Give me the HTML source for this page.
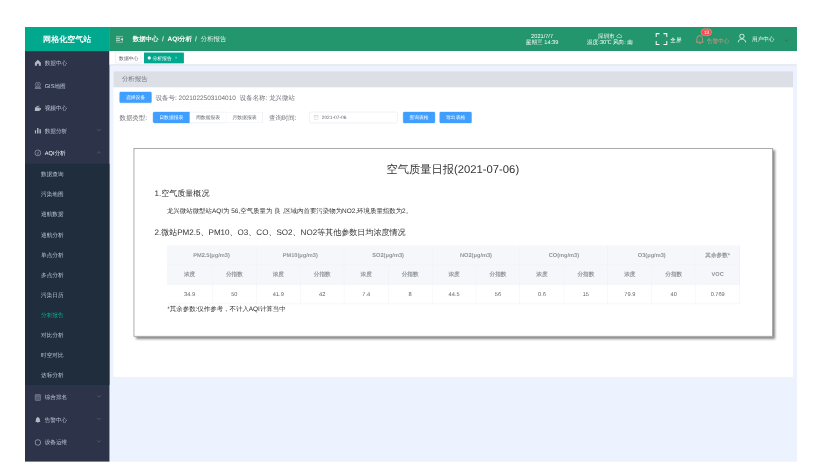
<!DOCTYPE html>
<html lang="zh">
<head>
<meta charset="utf-8">
<title>分析报告</title>
<style>
html,body{margin:0;padding:0;background:#fff;}
body{width:821px;height:475px;overflow:hidden;position:relative;font-family:"Liberation Sans",sans-serif;}
#stage{position:absolute;left:25px;top:27px;width:1920px;height:1081px;transform-origin:0 0;transform:scale(0.40208,0.4022);background:#edf3fe;overflow:hidden;color:#303133;}
#stage *{box-sizing:border-box;}
#stage{text-rendering:geometricPrecision;-webkit-font-smoothing:antialiased;}
.abs{position:absolute;white-space:nowrap;}
/* sidebar */
#side{position:absolute;left:0;top:0;width:210px;height:1081px;background:#2d344a;}
#logo{position:absolute;left:0;top:0;width:210px;height:60px;background:#00a88e;color:#fff;font-weight:bold;font-size:20px;line-height:63px;text-align:center;}
.mi{position:absolute;left:0;width:210px;height:56px;line-height:56px;font-size:14px;color:#bfcbd9;}
.mi span{position:absolute;left:49px;top:2px;white-space:nowrap;}
.mi svg.ic{position:absolute;left:23px;top:20px;width:18px;height:18px;}
.mi svg.ch{position:absolute;left:178px;top:22px;width:12px;height:12px;}
#sub{position:absolute;left:0;top:340px;width:210px;height:550px;background:#1f2d3d;}
.si{position:absolute;left:40px;height:50px;line-height:52px;font-size:14px;color:#bfcbd9;white-space:nowrap;}
/* header */
#head{position:absolute;left:210px;top:0;width:1710px;height:60px;background:#24966e;color:#fff;}
.bc{position:absolute;top:0;height:60px;line-height:60px;font-size:16px;color:#fff;white-space:nowrap;}
.hd{position:absolute;font-size:14px;line-height:16px;color:#fff;text-align:center;white-space:nowrap;}
/* tags */
#tags{position:absolute;left:210px;top:60px;width:1710px;height:34px;background:#fff;border-bottom:1px solid #d8dce5;box-shadow:0 1px 3px 0 rgba(0,0,0,.12),0 0 3px 0 rgba(0,0,0,.04);}
.tag{position:absolute;top:4px;height:26px;line-height:24px;font-size:12px;border:1px solid #d8dce5;color:#495060;background:#fff;padding:0 8px;white-space:nowrap;}
.tag.on{background:#00a88e;border-color:#00a88e;color:#fff;}
/* panel */
#panel{position:absolute;left:220px;top:110px;width:1690px;height:760px;background:#fff;}
#ph{position:absolute;left:0;top:0;width:1690px;height:40px;background:#dcdfe6;color:#73777d;font-size:16px;line-height:40px;padding-left:21px;}
.btn{position:absolute;height:28px;line-height:26px;font-size:12px;color:#fff;background:#409eff;border:1px solid #409eff;border-radius:3px;text-align:center;white-space:nowrap;}
.rb{position:absolute;top:211px;height:28px;line-height:26px;font-size:12px;color:#606266;background:#fff;border:1px solid #dcdfe6;text-align:center;white-space:nowrap;}
.lbl{position:absolute;font-size:16px;line-height:34px;color:#6e7176;white-space:nowrap;}
/* report */
#rep{position:absolute;left:270px;top:301px;width:1590px;height:469px;background:#fff;border:2px solid #999;box-shadow:5px 5px 6px rgba(0,0,0,.48);}
.rt{position:absolute;white-space:nowrap;color:#333;}
table{position:absolute;left:353px;top:543px;width:1425px;border-collapse:collapse;table-layout:fixed;font-size:14px;}
td,th{height:48px;padding:0;text-align:center;border-right:1px solid #ebeef5;border-bottom:1px solid #ebeef5;font-weight:normal;color:#606266;line-height:23px;}
th{background:#f5f7fa;color:#909399;font-weight:bold;}
tr.h2 th{height:49px;}
.mi span,.mi svg,.si,.bc,.hd,.lbl,.rt,table,.tag,.btn,.rb,#head svg,#logo,#ph{filter:blur(.55px);}
</style>
</head>
<body>
<div id="stage">

<!-- ============ SIDEBAR ============ -->
<div id="side">
  <div id="logo">网格化空气站</div>

  <div class="mi" style="top:60px"><svg class="ic" viewBox="0 0 18 18"><path d="M9 1.5 1.5 9v7.5h5.2v-5h4.6v5h5.2V9z" fill="#b4b8c2"/></svg><span>数据中心</span></div>
  <div class="mi" style="top:116px"><svg class="ic" viewBox="0 0 18 18" fill="none" stroke="#a9adb9" stroke-width="1.3"><circle cx="9" cy="7" r="6.200"/><circle cx="9" cy="7" r="2.100"/><path d="M4.200 12.300 1.800 17h14.400l-2.400-4.700M3 15h12"/></svg><span>GIS地图</span></div>
  <div class="mi" style="top:172px"><svg class="ic" viewBox="0 0 18 18"><path d="M1.5 8h11a1 1 0 0 1 1 1v1.6l3-1.8v6.4l-3-1.8V16a1 1 0 0 1-1 1h-11z M3 7.2 12 3.2l.8 2L5 8z" fill="#b4b8c2"/></svg><span>视频中心</span></div>
  <div class="mi" style="top:228px"><svg class="ic" viewBox="0 0 18 18"><path d="M1.5 9h3v7.5h-3zM7 3h3.5v13.500H7zM13 6.500h3.500v10H13z" fill="#b4b8c2"/></svg><span>数据分析</span><svg class="ch" viewBox="0 0 12 12" fill="none" stroke="#6d7487" stroke-width="1.4"><path d="M1.500 3.800 6 8.300 10.500 3.800"/></svg></div>
  <div class="mi" style="top:284px;color:#fff;"><svg class="ic" viewBox="0 0 18 18" fill="none" stroke="#c0c4cc" stroke-width="1.4"><circle cx="9" cy="9" r="7.300"/><path d="M9 13.500V9l3-3.500"/></svg><span style="color:#f4f6fa">AQI分析</span><svg class="ch" viewBox="0 0 12 12" fill="none" stroke="#6d7487" stroke-width="1.4"><path d="M1.500 8.300 6 3.800 10.500 8.300"/></svg></div>

  <div id="sub">
    <div class="si" style="top:0">数据查询</div>
    <div class="si" style="top:50px">污染地图</div>
    <div class="si" style="top:100px">巡航数据</div>
    <div class="si" style="top:150px">巡航分析</div>
    <div class="si" style="top:200px">单点分析</div>
    <div class="si" style="top:250px">多点分析</div>
    <div class="si" style="top:300px">污染日历</div>
    <div class="si" style="top:350px;color:#0db095">分析报告</div>
    <div class="si" style="top:400px">对比分析</div>
    <div class="si" style="top:450px">时空对比</div>
    <div class="si" style="top:500px">达标分析</div>
  </div>

  <div class="mi" style="top:890px"><svg class="ic" style="top:22px" viewBox="0 0 18 18" fill="#555b6e" stroke="#8e93a0" stroke-width="1.3"><rect x="2" y="2" width="14" height="14.500" rx="2"/><path d="M2 5.500h14" stroke="#777c8b"/></svg><span>综合排名</span><svg class="ch" viewBox="0 0 12 12" fill="none" stroke="#6d7487" stroke-width="1.4"><path d="M1.500 3.800 6 8.300 10.500 3.800"/></svg></div>
  <div class="mi" style="top:946px"><svg class="ic" style="top:22px" viewBox="0 0 18 18"><path d="M9 1.200a1.300 1.300 0 0 1 1.300 1.300v.5A5 5 0 0 1 14 7.800v4.200l1.800 2.200H2.200L4 12V7.800A5 5 0 0 1 7.700 3v-.5A1.300 1.300 0 0 1 9 1.200zM7 15.200h4a2 2 0 0 1-4 0z" fill="#b4b8c2"/></svg><span>告警中心</span><svg class="ch" viewBox="0 0 12 12" fill="none" stroke="#6d7487" stroke-width="1.4"><path d="M1.500 3.800 6 8.300 10.500 3.800"/></svg></div>
  <div class="mi" style="top:1002px"><svg class="ic" style="top:22px" viewBox="0 0 18 18" fill="none" stroke="#c0c4cc" stroke-width="1.600"><rect x="2.500" y="2.500" width="13" height="13" rx="5"/></svg><span>设备运维</span><svg class="ch" viewBox="0 0 12 12" fill="none" stroke="#6d7487" stroke-width="1.4"><path d="M1.500 3.800 6 8.300 10.500 3.800"/></svg></div>
  <div class="mi" style="top:1058px"><svg class="ic" style="top:22px" viewBox="0 0 18 18" fill="#555b6e" stroke="#8e93a0" stroke-width="1.4"><rect x="2" y="2.500" width="14" height="14" rx="1.500"/></svg><span>系统管理</span></div>
</div>

<!-- ============ HEADER ============ -->
<div id="head">
  <svg class="abs" style="left:16px;top:22px;width:18px;height:17px" viewBox="0 0 18 17"><path d="M0 0h18v2.200H0zM0 14.800h18v2.200H0z" fill="#fff" fill-opacity=".5"/><path d="M0 5h10v2.200H0zM0 9.800h10v2.200H0zM17.500 4.500v8L11.500 8.500z" fill="#fff" fill-opacity=".82"/></svg>
  <div class="bc" style="left:58px;font-weight:bold;">数据中心</div>
  <div class="bc" style="left:131px;color:#dfeee8;font-weight:bold">/</div>
  <div class="bc" style="left:144.600px;font-weight:bold;">AQI分析</div>
  <div class="bc" style="left:213px;color:#dfeee8;font-weight:bold">/</div>
  <div class="bc" style="left:227px;color:#e6f3ee">分析报告</div>

  <div class="hd" style="left:1026px;width:100px;top:14px">2021/7/7<br>星期三 14:39</div>
  <div class="hd" style="left:1175px;width:140px;top:14px">深圳市 <svg style="width:15px;height:12px;vertical-align:-1px" viewBox="0 0 15 12" fill="none" stroke="#fff" stroke-width="1.400"><path d="M4 10.500h7.500a2.600 2.600 0 0 0 .3-5.200A4 4 0 0 0 4.200 4.800 2.900 2.900 0 0 0 4 10.500z"/></svg><br>温度:30℃ 风向: 南</div>

  <svg class="abs" style="left:1358px;top:15px;width:30px;height:30px" viewBox="0 0 30 30" fill="none" stroke="#fff" stroke-width="3"><path d="M1.500 10V1.500H10M20 1.500h8.500V10M28.500 20v8.500H20M10 28.500H1.500V20"/></svg>
  <div class="hd" style="left:1395px;top:25px;">全屏</div>

  <svg class="abs" style="left:1456px;top:19px;width:24px;height:24px" viewBox="0 0 22 23" fill="none" stroke="#e0907d" stroke-width="1.900"><path d="M11 2.500a6.500 6.500 0 0 1 6.500 6.500v6l2 3h-17l2-3V9A6.500 6.500 0 0 1 11 2.500zM8.500 20.500a2.600 2.600 0 0 0 5 0M11 .5v2"/></svg>
  <div class="abs" style="left:1471px;top:4px;width:27px;height:18px;border-radius:9px;background:#f0504e;border:1px solid #f6c0b8;color:#fff;font-size:12px;line-height:16px;text-align:center;">13</div>
  <div class="hd" style="left:1486px;top:26px;color:#e3937f">告警中心</div>

  <svg class="abs" style="left:1562px;top:16px;width:22px;height:23px" viewBox="0 0 22 23" fill="none" stroke="#fff" stroke-width="2"><circle cx="11" cy="7" r="5.500"/><path d="M1.500 22.500c.8-6 4.500-8.500 9.500-8.500s8.700 2.500 9.500 8.500"/></svg>
  <div class="hd" style="left:1598px;top:23px;">用户中心</div>
  <svg class="abs" style="left:1679px;top:31px;width:9px;height:6px" viewBox="0 0 9 6"><path d="M0 0h9L4.500 6z" fill="#4a6b5e"/></svg>
</div>

<!-- ============ TAGS ============ -->
<div id="tags">
  <div class="tag" style="left:15px;width:64px;">数据中心</div>
  <div class="tag on" style="left:86px;width:99px;"><i style="display:inline-block;width:8px;height:8px;border-radius:50%;background:#fff;margin-right:4px;vertical-align:0"></i>分析报告<span style="display:inline-block;margin-left:8px;font-size:10px;color:#c9efe7;vertical-align:1px">×</span></div>
</div>

<!-- ============ PANEL ============ -->
<div id="panel"><div id="ph">分析报告</div></div>

<div class="btn" style="left:235px;top:161px;width:80px;">选择设备</div>
<div class="lbl" style="left:325px;top:161px;">设备号: 2021022503104010<span style="margin-left:10px">设备名称: 龙兴微站</span></div>

<div class="lbl" style="left:235px;top:211px;">数据类型:</div>
<div class="rb" style="left:318px;width:92px;background:#409eff;border-color:#409eff;color:#fff;border-radius:4px 0 0 4px;">日数据报表</div>
<div class="rb" style="left:410px;width:91px;border-left:0;">周数据报表</div>
<div class="rb" style="left:501px;width:91px;border-left:0;border-radius:0 4px 4px 0;">月数据报表</div>
<div class="lbl" style="left:607px;top:211px;">查询时间:</div>
<div class="abs" style="left:707px;top:211px;width:220px;height:28px;border:1px solid #dcdfe6;border-radius:4px;background:#fff;font-size:12px;line-height:26px;color:#606266;padding-left:30px;">2021-07-06
  <svg class="abs" style="left:10px;top:7px;width:12px;height:12px" viewBox="0 0 12 12" fill="none" stroke="#c0c4cc" stroke-width="1"><rect x="1" y="1.500" width="10" height="9.500"/><path d="M1 4.500h10M3.500 0v2.500M8.500 0v2.500"/></svg>
</div>
<div class="btn" style="left:940px;top:211px;width:80px;">查询表格</div>
<div class="btn" style="left:1031px;top:211px;width:80px;">导出表格</div>

<!-- ============ REPORT ============ -->
<div id="rep"></div>
<div class="rt" style="left:764px;width:600px;text-align:center;top:334px;font-size:28px;line-height:40px;">空气质量日报(2021-07-06)</div>
<div class="rt" style="left:322px;top:399px;font-size:20px;line-height:28px;">1.空气质量概况</div>
<div class="rt" style="left:353px;top:447px;font-size:16px;line-height:24px;">龙兴微站微型站AQI为 56,空气质量为 良 ,区域内首要污染物为NO2,环境质量指数为2。</div>
<div class="rt" style="left:322px;top:497px;font-size:20px;line-height:28px;">2.微站PM2.5、PM10、O3、CO、SO2、NO2等其他参数日均浓度情况</div>

<table>
<colgroup><col style="width:113px"><col span="12"></colgroup>
<tr><th colspan="2">PM2.5(μg/m3)</th><th colspan="2">PM10(μg/m3)</th><th colspan="2">SO2(μg/m3)</th><th colspan="2">NO2(μg/m3)</th><th colspan="2">CO(mg/m3)</th><th colspan="2">O3(μg/m3)</th><th>其余参数*</th></tr>
<tr class="h2"><th>浓度</th><th>分指数</th><th>浓度</th><th>分指数</th><th>浓度</th><th>分指数</th><th>浓度</th><th>分指数</th><th>浓度</th><th>分指数</th><th>浓度</th><th>分指数</th><th>VOC</th></tr>
<tr><td>34.9</td><td>50</td><td>41.9</td><td>42</td><td>7.4</td><td>8</td><td>44.5</td><td>56</td><td>0.6</td><td>15</td><td>79.9</td><td>40</td><td>0.769</td></tr>
</table>
<div class="rt" style="left:354px;top:689px;font-size:16px;line-height:24px;">*其余参数:仅作参考，不计入AQI计算当中</div>

</div>
</body>
</html>
